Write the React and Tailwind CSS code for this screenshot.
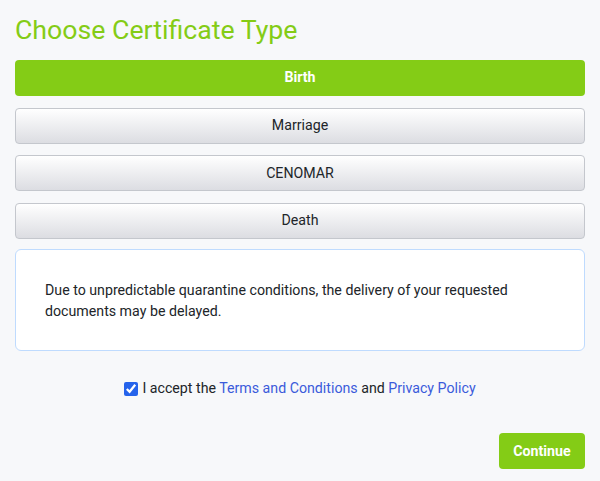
import React, { useState } from 'react'

const types = ['Birth', 'Marriage', 'CENOMAR', 'Death']

export default function App() {
  const [selected, setSelected] = useState('Birth')
  const [accepted, setAccepted] = useState(true)

  return (
    <div className="min-h-[481px] w-[600px] bg-[#f7f8fa] px-[15px] pt-[12px] font-['Roboto',sans-serif] text-[#212529]">
      <h1 className="text-[26.7px] leading-[36px] text-[#84cc16]">Choose Certificate Type</h1>

      <div className="mt-[12px] flex flex-col gap-[11.7px]">
        {types.map((t) =>
          t === selected ? (
            <button
              key={t}
              onClick={() => setSelected(t)}
              className="h-[36px] w-full rounded-[4px] bg-[#84cc16] text-[14.2px] font-bold text-white"
            >
              {t}
            </button>
          ) : (
            <button
              key={t}
              onClick={() => setSelected(t)}
              className="h-[36px] w-full rounded-[4px] border border-[#c4c7cd] bg-gradient-to-b from-white to-[#dcdde2] text-[14.2px] text-[#212529]"
            >
              {t}
            </button>
          )
        )}
      </div>

      <div className="mt-[10px] flex h-[102px] items-center rounded-[6px] border border-[#bfdbfe] bg-white px-[29px] pt-[2px]">
        <p className="text-[14.2px] leading-[21px]">
          Due to unpredictable quarantine conditions, the delivery of your requested documents may be delayed.
        </p>
      </div>

      <label className="mt-[27px] flex items-center justify-center gap-[4px] text-[14.2px]">
        <input
          type="checkbox"
          checked={accepted}
          onChange={(e) => setAccepted(e.target.checked)}
          className="h-[14px] w-[14px] accent-[#2563eb]"
        />
        <span>
          I accept the <a className="text-[#3b5bdb]">Terms and Conditions</a> and{' '}
          <a className="text-[#3b5bdb]">Privacy Policy</a>
        </span>
      </label>

      <div className="mt-[34px] flex justify-end">
        <button className="h-[36px] w-[86px] rounded-[4px] bg-[#84cc16] text-[14.2px] font-bold text-white">
          Continue
        </button>
      </div>
    </div>
  )
}
